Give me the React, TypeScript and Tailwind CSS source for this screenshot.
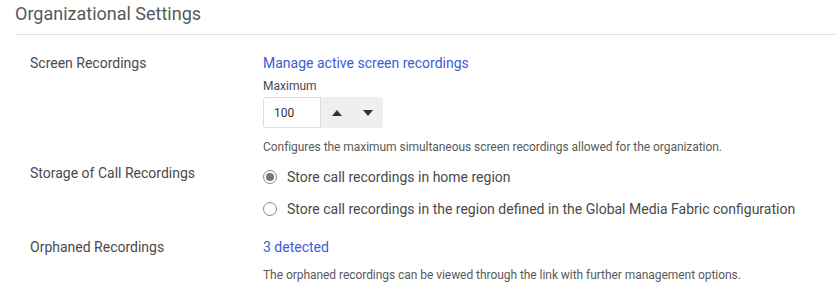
import { useState } from 'react';

function Radio({ checked }: { checked: boolean }) {
  return (
    <span className="flex h-[14px] w-[14px] items-center justify-center rounded-full border border-[#8a8a8a] bg-white">
      {checked && <span className="h-[8px] w-[8px] rounded-full bg-[#777]" />}
    </span>
  );
}

export default function App() {
  const [region, setRegion] = useState('home');

  return (
    <div className="w-[836px] h-[283px] overflow-hidden bg-white text-[#4a4a4a] font-['Roboto',sans-serif]">
      {/* Header */}
      <div className="pl-[15px]">
        <h1 className="pt-[2px] text-[18px] leading-[24px] text-[#585858] font-normal">Organizational Settings</h1>
        <div className="mt-[8px] h-px bg-[#e2e2e2]" />
      </div>

      {/* Screen recordings */}
      <div className="mt-[18px] flex pl-[30px]">
        <div className="w-[233px] text-[14px] leading-[20px]">Screen Recordings</div>
        <div className="flex flex-col">
          <a className="text-[14px] leading-[20px] text-[#3d5bd6]">Manage active screen recordings</a>
          <div className="mt-[5px] text-[12px] leading-[16px] text-[#4a4a4a]">Maximum</div>
          <div className="mt-[3px] flex h-[31px] w-[120px] rounded-[3px] bg-[#efefef]">
            <div className="flex w-[58px] items-center rounded-l-[3px] border border-[#d8dee6] bg-white pl-[10px] text-[12px] text-[#333]">
              100
            </div>
            <button className="flex w-[31px] items-center justify-center">
              <svg width="10" height="6" viewBox="0 0 10 6"><path d="M0 6 L5 0 L10 6 Z" fill="#333" /></svg>
            </button>
            <button className="flex w-[31px] items-center justify-center">
              <svg width="10" height="6" viewBox="0 0 10 6"><path d="M0 0 L10 0 L5 6 Z" fill="#333" /></svg>
            </button>
          </div>
          <div className="mt-[11px] text-[12px] leading-[16px] tracking-[-0.05px] text-[#5a5a5a]">
            Configures the maximum simultaneous screen recordings allowed for the organization.
          </div>
        </div>
      </div>

      {/* Storage */}
      <div className="mt-[8px] flex pl-[30px]">
        <div className="w-[233px] text-[14px] leading-[20px]">Storage of Call Recordings</div>
        <div className="flex flex-col gap-[12px] pt-[4px]">
          <label className="flex items-center gap-[10px] text-[14px] leading-[20px]" onClick={() => setRegion('home')}>
            <Radio checked={region === 'home'} />
            Store call recordings in home region
          </label>
          <label className="flex items-center gap-[10px] text-[14px] leading-[20px]" onClick={() => setRegion('gmf')}>
            <Radio checked={region === 'gmf'} />
            Store call recordings in the region defined in the Global Media Fabric configuration
          </label>
        </div>
      </div>

      {/* Orphaned */}
      <div className="mt-[18px] flex pl-[30px]">
        <div className="w-[233px] text-[14px] leading-[20px]">Orphaned Recordings</div>
        <div className="flex flex-col">
          <a className="text-[14px] leading-[20px] text-[#3d5bd6]">3 detected</a>
          <div className="mt-[10px] text-[12px] leading-[16px] tracking-[-0.05px] text-[#5a5a5a]">
            The orphaned recordings can be viewed through the link with further management options.
          </div>
        </div>
      </div>
    </div>
  );
}
